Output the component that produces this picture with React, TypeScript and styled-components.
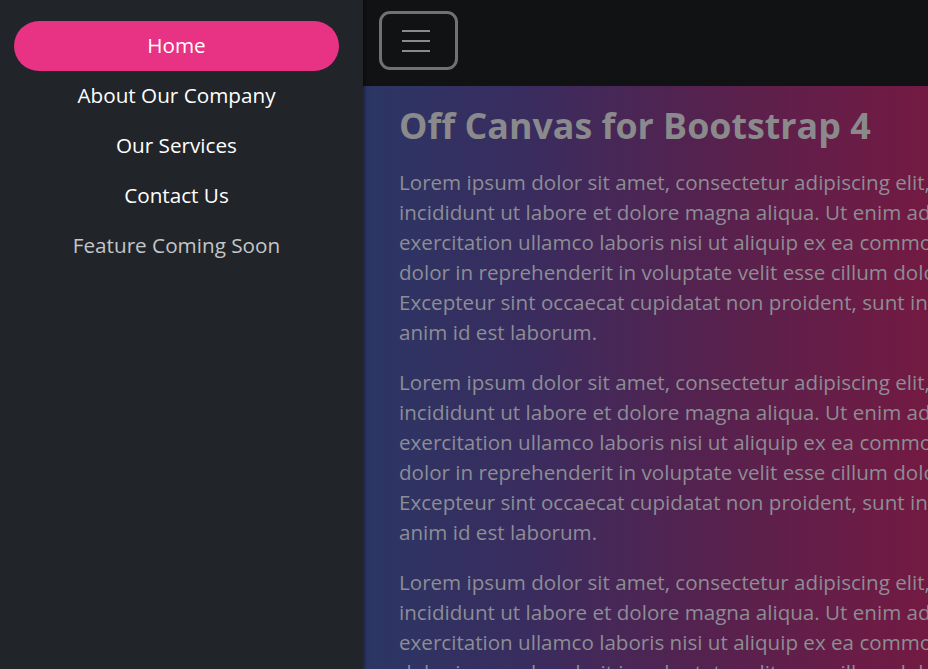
import React from "react";
import styled, { createGlobalStyle } from "styled-components";

const links = [
  { label: "Home", active: true },
  { label: "About Our Company" },
  { label: "Our Services" },
  { label: "Contact Us" },
  { label: "Feature Coming Soon", muted: true },
];

const lorem = [
  "Lorem ipsum dolor sit amet, consectetur adipiscing elit, sed do eiusmod tempor",
  "incididunt ut labore et dolore magna aliqua. Ut enim ad minim veniam, quis nostrud",
  "exercitation ullamco laboris nisi ut aliquip ex ea commodo consequat. Duis aute irure",
  "dolor in reprehenderit in voluptate velit esse cillum dolore eu fugiat nulla pariatur.",
  "Excepteur sint occaecat cupidatat non proident, sunt in culpa qui officia deserunt mollit",
  "anim id est laborum.",
];

const App = () => {
  return (
    <>
      <GlobalStyle />
      <Page>
        <Sidebar>
          <NavList>
            {links.map((l) => (
              <NavItem key={l.label} $active={l.active} $muted={l.muted}>
                {l.label}
              </NavItem>
            ))}
          </NavList>
        </Sidebar>
        <Main>
          <TopBar>
            <Toggler aria-label="Toggle navigation">
              <Bar />
              <Bar />
              <Bar />
            </Toggler>
          </TopBar>
          <Content>
            <Title>Off Canvas for Bootstrap 4</Title>
            {[0, 1, 2].map((i) => (
              <Para key={i}>
                {lorem.map((line, j) => (
                  <Line key={j}>{line}</Line>
                ))}
              </Para>
            ))}
          </Content>
        </Main>
      </Page>
    </>
  );
};

export default App;

const GlobalStyle = createGlobalStyle`
  html, body {
    margin: 0;
    padding: 0;
    height: 100%;
    overflow: hidden;
    background: #212529;
  }
  body {
    font-family: "Open Sans", "Noto Sans", sans-serif;
  }
  #root {
    height: 100%;
  }
`;

const Page = styled.div`
  display: flex;
  height: 669px;
  width: 928px;
  overflow: hidden;
`;

const Sidebar = styled.aside`
  flex: 0 0 363px;
  background-color: #212529;
  box-shadow: 2px 0 3px rgba(0, 0, 0, 0.35);
  position: relative;
  z-index: 1;
  padding: 21px 24px 0 14px;
  box-sizing: border-box;
`;

const NavList = styled.nav`
  display: flex;
  flex-direction: column;
`;

const NavItem = styled.a<{ $active?: boolean; $muted?: boolean }>`
  display: flex;
  align-items: center;
  justify-content: center;
  height: 50px;
  padding-bottom: 3px;
  box-sizing: border-box;
  border-radius: 25px;
  font-size: 20.7px;
  color: ${(p) => (p.$muted ? "#c4c6c8" : "#ffffff")};
  background-color: ${(p) => (p.$active ? "#e83283" : "transparent")};
  text-decoration: none;
  cursor: pointer;
`;

const Main = styled.main`
  flex: 1;
  min-width: 0;
  display: flex;
  flex-direction: column;
`;

const TopBar = styled.header`
  height: 86px;
  flex: 0 0 86px;
  background-color: #111214;
  display: flex;
  align-items: flex-start;
  padding: 11px 16px 0;
  box-sizing: border-box;
`;

const Toggler = styled.button`
  width: 79px;
  height: 59px;
  box-sizing: border-box;
  border: 3.5px solid #717173;
  border-radius: 11px;
  background: transparent;
  display: flex;
  flex-direction: column;
  align-items: center;
  justify-content: center;
  gap: 8px;
  padding: 0;
`;

const Bar = styled.span`
  display: block;
  width: 28px;
  height: 2px;
  background-color: #8a8a8c;
  margin-left: -6px;
`;

const Content = styled.section`
  flex: 1;
  background: linear-gradient(90deg, #2b3665 0%, #3a2c5e 30%, #55224f 60%, #731a42 100%);
  padding: 18px 0 0 36px;
  overflow: hidden;
`;

const Title = styled.h2`
  margin: 0 0 20px;
  font-size: 35.8px;
  font-weight: 700;
  line-height: 1.2;
  color: #8a8a8c;
  white-space: nowrap;
`;

const Para = styled.p`
  margin: 0 0 20px;
  font-size: 20.6px;
  line-height: 30px;
  color: #8d8d95;
  white-space: nowrap;
`;

const Line = styled.span`
  display: block;
`;
